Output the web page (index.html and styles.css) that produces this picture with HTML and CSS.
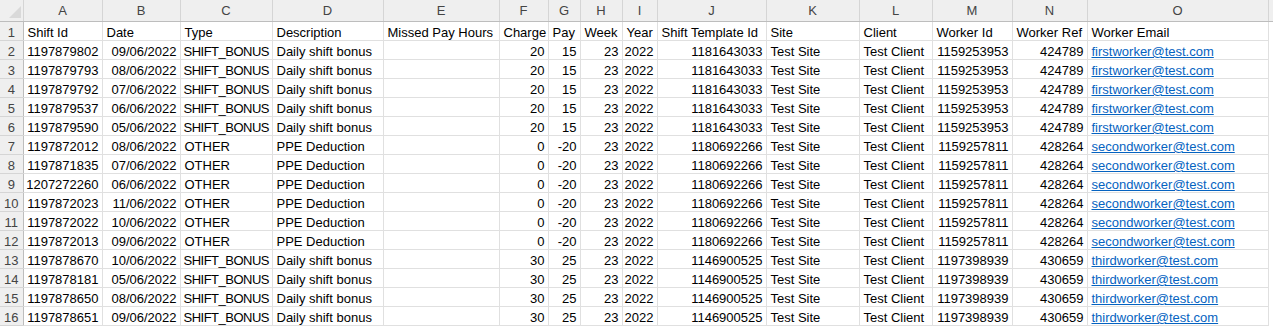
FILE: index.html
```html
<!DOCTYPE html>
<html>
<head>
<meta charset="utf-8">
<link rel="stylesheet" href="styles.css">
</head>
<body>
<table class="sheet">
<colgroup>
<col class="w-rh"><col class="w-a"><col class="w-b"><col class="w-c"><col class="w-d"><col class="w-e"><col class="w-f"><col class="w-g"><col class="w-h"><col class="w-i"><col class="w-j"><col class="w-k"><col class="w-l"><col class="w-m"><col class="w-n"><col class="w-o"><col class="w-x">
</colgroup>
<thead>
<tr class="colhead">
<th class="corner"><span class="tri"></span></th><th>A</th><th>B</th><th>C</th><th>D</th><th>E</th><th>F</th><th>G</th><th>H</th><th>I</th><th>J</th><th>K</th><th>L</th><th>M</th><th>N</th><th>O</th><th class="x"></th>
</tr>
</thead>
<tbody>
<tr><th class="rh">1</th><td>Shift Id</td><td>Date</td><td>Type</td><td>Description</td><td>Missed Pay Hours</td><td>Charge</td><td>Pay</td><td>Week</td><td>Year</td><td>Shift Template Id</td><td>Site</td><td>Client</td><td>Worker Id</td><td>Worker Ref</td><td>Worker Email</td><td class="x"></td></tr>
<tr><th class="rh">2</th><td class="n">1197879802</td><td class="n">09/06/2022</td><td class="cap">SHIFT_BONUS</td><td>Daily shift bonus</td><td></td><td class="n">20</td><td class="n">15</td><td class="n">23</td><td class="n">2022</td><td class="n">1181643033</td><td>Test Site</td><td>Test Client</td><td class="n">1159253953</td><td class="n">424789</td><td><a href="#">firstworker@test.com</a></td><td class="x"></td></tr>
<tr><th class="rh">3</th><td class="n">1197879793</td><td class="n">08/06/2022</td><td class="cap">SHIFT_BONUS</td><td>Daily shift bonus</td><td></td><td class="n">20</td><td class="n">15</td><td class="n">23</td><td class="n">2022</td><td class="n">1181643033</td><td>Test Site</td><td>Test Client</td><td class="n">1159253953</td><td class="n">424789</td><td><a href="#">firstworker@test.com</a></td><td class="x"></td></tr>
<tr><th class="rh">4</th><td class="n">1197879792</td><td class="n">07/06/2022</td><td class="cap">SHIFT_BONUS</td><td>Daily shift bonus</td><td></td><td class="n">20</td><td class="n">15</td><td class="n">23</td><td class="n">2022</td><td class="n">1181643033</td><td>Test Site</td><td>Test Client</td><td class="n">1159253953</td><td class="n">424789</td><td><a href="#">firstworker@test.com</a></td><td class="x"></td></tr>
<tr><th class="rh">5</th><td class="n">1197879537</td><td class="n">06/06/2022</td><td class="cap">SHIFT_BONUS</td><td>Daily shift bonus</td><td></td><td class="n">20</td><td class="n">15</td><td class="n">23</td><td class="n">2022</td><td class="n">1181643033</td><td>Test Site</td><td>Test Client</td><td class="n">1159253953</td><td class="n">424789</td><td><a href="#">firstworker@test.com</a></td><td class="x"></td></tr>
<tr><th class="rh">6</th><td class="n">1197879590</td><td class="n">05/06/2022</td><td class="cap">SHIFT_BONUS</td><td>Daily shift bonus</td><td></td><td class="n">20</td><td class="n">15</td><td class="n">23</td><td class="n">2022</td><td class="n">1181643033</td><td>Test Site</td><td>Test Client</td><td class="n">1159253953</td><td class="n">424789</td><td><a href="#">firstworker@test.com</a></td><td class="x"></td></tr>
<tr><th class="rh">7</th><td class="n">1197872012</td><td class="n">08/06/2022</td><td>OTHER</td><td>PPE Deduction</td><td></td><td class="n">0</td><td class="n">-20</td><td class="n">23</td><td class="n">2022</td><td class="n">1180692266</td><td>Test Site</td><td>Test Client</td><td class="n">1159257811</td><td class="n">428264</td><td><a href="#">secondworker@test.com</a></td><td class="x"></td></tr>
<tr><th class="rh">8</th><td class="n">1197871835</td><td class="n">07/06/2022</td><td>OTHER</td><td>PPE Deduction</td><td></td><td class="n">0</td><td class="n">-20</td><td class="n">23</td><td class="n">2022</td><td class="n">1180692266</td><td>Test Site</td><td>Test Client</td><td class="n">1159257811</td><td class="n">428264</td><td><a href="#">secondworker@test.com</a></td><td class="x"></td></tr>
<tr><th class="rh">9</th><td class="n">1207272260</td><td class="n">06/06/2022</td><td>OTHER</td><td>PPE Deduction</td><td></td><td class="n">0</td><td class="n">-20</td><td class="n">23</td><td class="n">2022</td><td class="n">1180692266</td><td>Test Site</td><td>Test Client</td><td class="n">1159257811</td><td class="n">428264</td><td><a href="#">secondworker@test.com</a></td><td class="x"></td></tr>
<tr><th class="rh">10</th><td class="n">1197872023</td><td class="n">11/06/2022</td><td>OTHER</td><td>PPE Deduction</td><td></td><td class="n">0</td><td class="n">-20</td><td class="n">23</td><td class="n">2022</td><td class="n">1180692266</td><td>Test Site</td><td>Test Client</td><td class="n">1159257811</td><td class="n">428264</td><td><a href="#">secondworker@test.com</a></td><td class="x"></td></tr>
<tr><th class="rh">11</th><td class="n">1197872022</td><td class="n">10/06/2022</td><td>OTHER</td><td>PPE Deduction</td><td></td><td class="n">0</td><td class="n">-20</td><td class="n">23</td><td class="n">2022</td><td class="n">1180692266</td><td>Test Site</td><td>Test Client</td><td class="n">1159257811</td><td class="n">428264</td><td><a href="#">secondworker@test.com</a></td><td class="x"></td></tr>
<tr><th class="rh">12</th><td class="n">1197872013</td><td class="n">09/06/2022</td><td>OTHER</td><td>PPE Deduction</td><td></td><td class="n">0</td><td class="n">-20</td><td class="n">23</td><td class="n">2022</td><td class="n">1180692266</td><td>Test Site</td><td>Test Client</td><td class="n">1159257811</td><td class="n">428264</td><td><a href="#">secondworker@test.com</a></td><td class="x"></td></tr>
<tr><th class="rh">13</th><td class="n">1197878670</td><td class="n">10/06/2022</td><td class="cap">SHIFT_BONUS</td><td>Daily shift bonus</td><td></td><td class="n">30</td><td class="n">25</td><td class="n">23</td><td class="n">2022</td><td class="n">1146900525</td><td>Test Site</td><td>Test Client</td><td class="n">1197398939</td><td class="n">430659</td><td><a href="#">thirdworker@test.com</a></td><td class="x"></td></tr>
<tr><th class="rh">14</th><td class="n">1197878181</td><td class="n">05/06/2022</td><td class="cap">SHIFT_BONUS</td><td>Daily shift bonus</td><td></td><td class="n">30</td><td class="n">25</td><td class="n">23</td><td class="n">2022</td><td class="n">1146900525</td><td>Test Site</td><td>Test Client</td><td class="n">1197398939</td><td class="n">430659</td><td><a href="#">thirdworker@test.com</a></td><td class="x"></td></tr>
<tr><th class="rh">15</th><td class="n">1197878650</td><td class="n">08/06/2022</td><td class="cap">SHIFT_BONUS</td><td>Daily shift bonus</td><td></td><td class="n">30</td><td class="n">25</td><td class="n">23</td><td class="n">2022</td><td class="n">1146900525</td><td>Test Site</td><td>Test Client</td><td class="n">1197398939</td><td class="n">430659</td><td><a href="#">thirdworker@test.com</a></td><td class="x"></td></tr>
<tr><th class="rh">16</th><td class="n">1197878651</td><td class="n">09/06/2022</td><td class="cap">SHIFT_BONUS</td><td>Daily shift bonus</td><td></td><td class="n">30</td><td class="n">25</td><td class="n">23</td><td class="n">2022</td><td class="n">1146900525</td><td>Test Site</td><td>Test Client</td><td class="n">1197398939</td><td class="n">430659</td><td><a href="#">thirdworker@test.com</a></td><td class="x"></td></tr>
</tbody>
</table>
</body>
</html>
```

FILE: styles.css
```css
html, body {
  margin: 0;
  padding: 0;
  background: #ffffff;
  overflow: hidden;
}

.sheet {
  border-collapse: collapse;
  table-layout: fixed;
  width: 1274px;
  font-family: "Liberation Sans", Arial, sans-serif;
  font-size: 13px;
  color: #000;
}

.w-rh { width: 23px; }
.w-a { width: 79px; }
.w-b { width: 78px; }
.w-c { width: 92px; }
.w-d { width: 111px; }
.w-e { width: 116px; }
.w-f { width: 49px; }
.w-g { width: 32px; }
.w-h { width: 42px; }
.w-i { width: 35px; }
.w-j { width: 109px; }
.w-k { width: 93px; }
.w-l { width: 73px; }
.w-m { width: 80px; }
.w-n { width: 75px; }
.w-o { width: 181px; }
.w-x { width: 6px; }

.colhead th {
  height: 21px;
  padding: 0;
  background: #efefef;
  color: #444444;
  font-weight: normal;
  text-align: center;
  border-left: 1px solid #d5d5d5;
  border-right: 1px solid #d5d5d5;
  border-bottom: 1px solid #bdbdbd;
  line-height: 21px;
}

.colhead th.corner {
  position: relative;
  border-left: none;
}

.tri {
  position: absolute;
  right: 2px;
  bottom: 3px;
  width: 0;
  height: 0;
  border-left: 12px solid transparent;
  border-bottom: 12px solid #d9d9d9;
}

tbody tr {
  height: 19px;
}

th.rh {
  padding: 3px 0 0 0;
  height: 15px;
  line-height: 15px;
  background: #efefef;
  color: #444444;
  font-weight: normal;
  text-align: center;
  border-right: 1px solid #bdbdbd;
  border-bottom: 1px solid #d5d5d5;
}

td {
  padding: 3px 3px 0 4px;
  height: 15px;
  line-height: 15px;
  white-space: nowrap;
  overflow: hidden;
  border-right: 1px solid #e0e0e0;
  border-bottom: 1px solid #e0e0e0;
  text-align: left;
}

td.n {
  text-align: right;
  padding: 3px 3px 0 2px;
}

td.cap {
  letter-spacing: -0.5px;
  padding-left: 3px;
  padding-right: 0;
}

td.x, th.x {
  border-left: 1px solid #c8c8c8;
  border-right: none;
}

td.x {
  border-bottom: none;
}

a {
  color: #0563c1;
  text-decoration: underline;
}
```
